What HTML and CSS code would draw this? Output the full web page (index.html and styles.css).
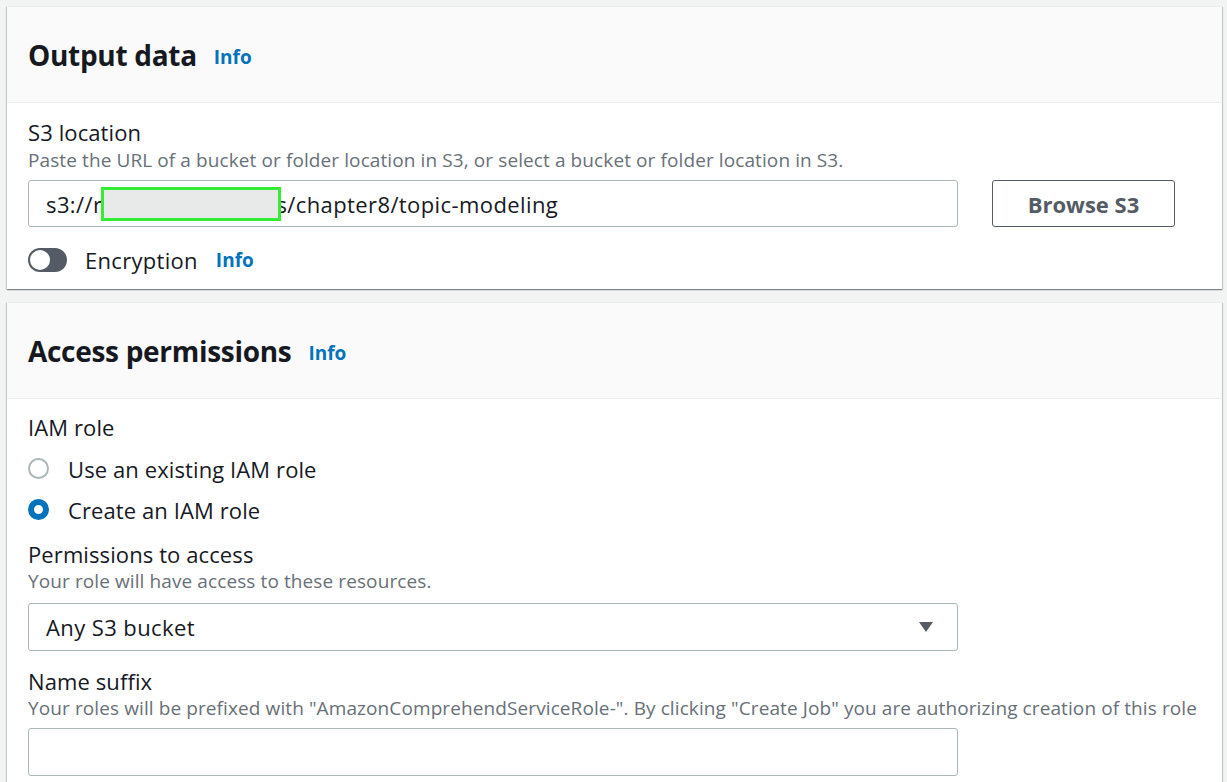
FILE: index.html
```html
<!DOCTYPE html>
<html lang="en">
<head>
<meta charset="utf-8">
<title>Output data</title>
<link rel="stylesheet" href="styles.css">
</head>
<body>
<div class="page">
  <section class="card card-output">
    <header class="card-header">
      <h2 class="card-title">Output data</h2>
      <a class="info" href="#">Info</a>
    </header>
    <div class="card-body">
      <div class="label">S3 location</div>
      <div class="desc">Paste the URL of a bucket or folder location in S3, or select a bucket or folder location in S3.</div>
      <div class="s3-row">
        <div class="input input-s3">
          <span class="input-text">s3://r<span class="spacer"></span>s/chapter8/topic-modeling</span>
          <span class="redact"></span>
        </div>
        <button class="btn">Browse S3</button>
      </div>
      <div class="toggle-row">
        <span class="toggle"><span class="knob"></span></span>
        <span class="toggle-label">Encryption</span>
        <a class="info info-sm" href="#">Info</a>
      </div>
    </div>
  </section>

  <section class="card card-access">
    <header class="card-header">
      <h2 class="card-title">Access permissions</h2>
      <a class="info" href="#">Info</a>
    </header>
    <div class="card-body body-access">
      <div class="label">IAM role</div>
      <div class="radios">
        <div class="radio-row"><span class="radio"></span><span class="radio-label">Use an existing IAM role</span></div>
        <div class="radio-row"><span class="radio checked"></span><span class="radio-label">Create an IAM role</span></div>
      </div>
      <div class="label label-gap">Permissions to access</div>
      <div class="desc desc-tight">Your role will have access to these resources.</div>
      <div class="input select">
        <span class="input-text">Any S3 bucket</span>
        <svg class="caret" width="16" height="12" viewBox="0 0 16 12"><path d="M1 1 L15 1 L8 11 Z" fill="#545b64"/></svg>
      </div>
      <div class="label label-gap2">Name suffix</div>
      <div class="desc desc-tight">Your roles will be prefixed with "AmazonComprehendServiceRole-". By clicking "Create Job" you are authorizing creation of this role</div>
      <div class="input input-name"></div>
    </div>
  </section>
</div>
</body>
</html>
```

FILE: styles.css
```css
html, body {
  margin: 0;
  padding: 0;
}
body {
  background: #f2f3f3;
  font-family: "Open Sans", "Liberation Sans", sans-serif;
  color: #16191f;
  width: 1227px;
  height: 782px;
  overflow: hidden;
}
.page {
  padding: 6px 5px 0 7px;
  display: flex;
  flex-direction: column;
  gap: 13px;
}
.card {
  background: #ffffff;
  border-top: 1px solid #eaeded;
  box-shadow: 0 1px 1px 0 rgba(0, 28, 36, 0.3), 1px 1px 1px 0 rgba(0, 28, 36, 0.15), -1px 1px 1px 0 rgba(0, 28, 36, 0.15);
}
.card-header {
  background: #fafafa;
  border-bottom: 1px solid #eaeded;
  height: 95px;
  display: flex;
  align-items: center;
  padding: 0 21px;
  gap: 17px;
}
.card-title {
  margin: 0;
  font-size: 28px;
  font-weight: 700;
  line-height: 34px;
  letter-spacing: -0.3px;
}
.info {
  color: #0073bb;
  font-weight: 700;
  font-size: 19px;
  text-decoration: none;
  line-height: 24px;
  margin-top: 4px;
}
.card-body {
  padding: 15px 21px 16px;
}
.label {
  font-size: 22px;
  line-height: 28px;
  letter-spacing: 0.1px;
}
.desc {
  font-size: 19px;
  line-height: 28px;
  color: #687078;
  letter-spacing: 0.1px;
}
.desc-tight {
  line-height: 27px;
}
.s3-row {
  display: flex;
  gap: 34px;
  margin-top: 6px;
}
.input {
  position: relative;
  width: 930px;
  height: 47px;
  box-sizing: border-box;
  border: 1px solid #aab7b8;
  border-radius: 3px;
  display: flex;
  align-items: center;
  padding: 0 17px;
  font-size: 22px;
  letter-spacing: 0.4px;
  background: #fff;
}
.input-text {
  white-space: nowrap;
}
.spacer {
  display: inline-block;
  width: 174px;
}
.redact {
  position: absolute;
  left: 72px;
  top: 6px;
  width: 180px;
  height: 34px;
  box-sizing: border-box;
  border: 3px solid #33ec33;
  background: #e8eaea;
}
.btn {
  width: 183px;
  height: 47px;
  box-sizing: border-box;
  border: 1px solid #545b64;
  border-radius: 3px;
  background: #fff;
  color: #545b64;
  font-family: "Open Sans", "Liberation Sans", sans-serif;
  font-weight: 700;
  font-size: 22px;
  padding: 0;
}
.toggle-row {
  display: flex;
  align-items: center;
  height: 26px;
  margin-top: 20px;
}
.toggle {
  width: 39px;
  height: 24px;
  border-radius: 12px;
  background: #545b64;
  display: flex;
  align-items: center;
  padding: 0 2px;
  box-sizing: border-box;
}
.knob {
  width: 20px;
  height: 20px;
  border-radius: 50%;
  background: #fff;
}
.toggle-label {
  font-size: 22px;
  letter-spacing: 0.3px;
  margin-left: 18px;
  margin-right: 18px;
}
.info-sm {
  margin-top: 0;
}
.body-access {
  padding-top: 14px;
}
.radios {
  margin-top: 7px;
  display: flex;
  flex-direction: column;
}
.radio-row {
  height: 41px;
  display: flex;
  align-items: center;
}
.radio {
  width: 21px;
  height: 21px;
  box-sizing: border-box;
  border: 2px solid #aab7b8;
  border-radius: 50%;
  margin-right: 19px;
  background: #fff;
}
.radio.checked {
  border: 6.5px solid #0073bb;
}
.radio-label {
  font-size: 22px;
  letter-spacing: 0.1px;
}
.label-gap {
  margin-top: 10px;
}
.select {
  height: 48px;
  margin-top: 8px;
  justify-content: space-between;
  padding-right: 23px;
}
.label-gap2 {
  margin-top: 16px;
}
.input-name {
  height: 48px;
  margin-top: 6px;
}
```
